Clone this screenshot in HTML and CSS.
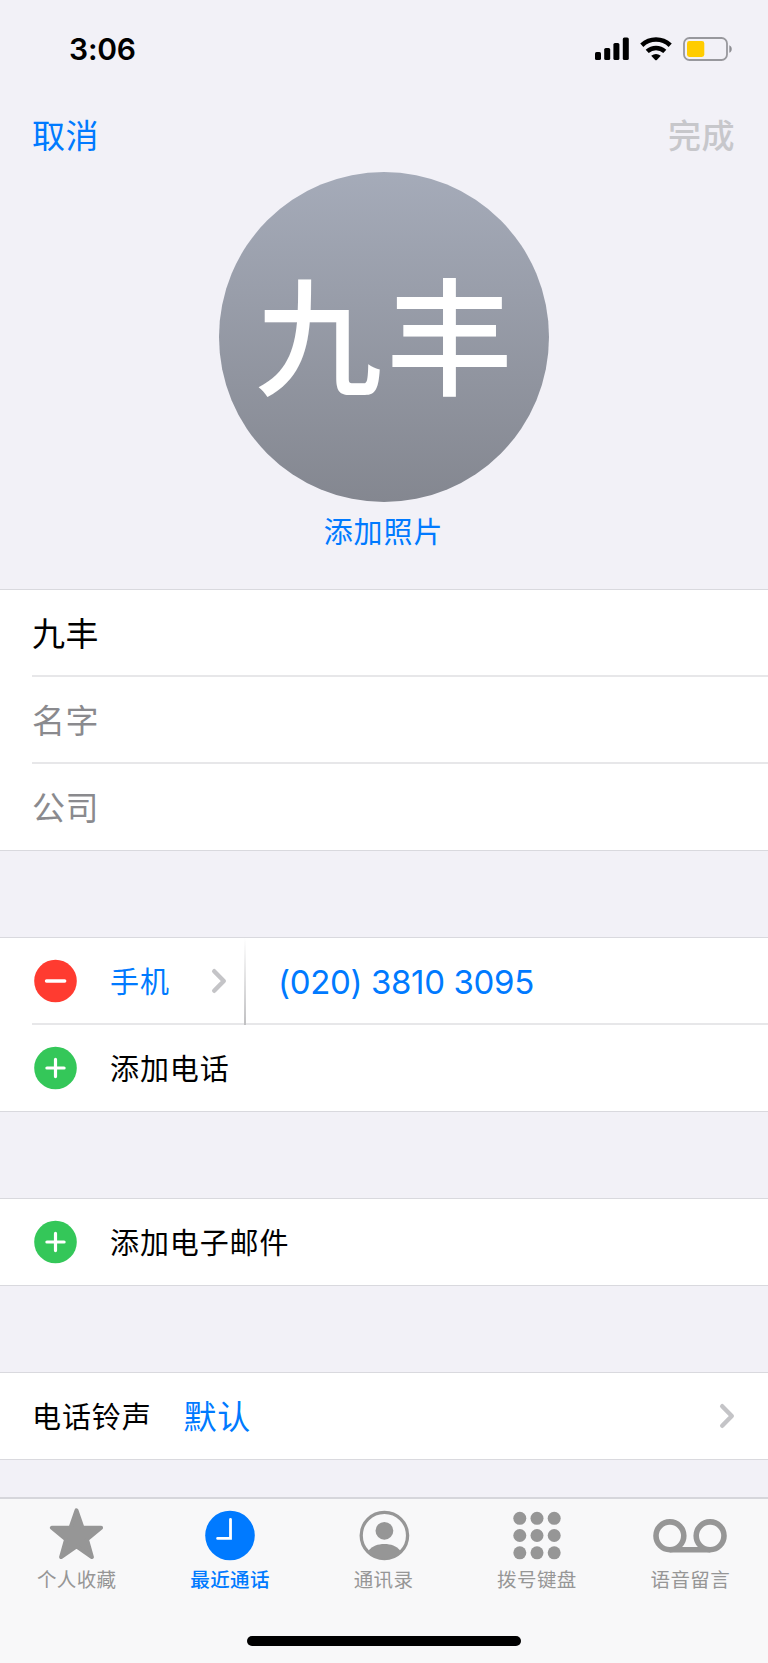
FILE: index.html
```html
<!DOCTYPE html>
<html lang="zh-CN">
<head>
  <meta charset="UTF-8">
  <meta name="viewport" content="width=device-width, initial-scale=1.0">
  <title>九丰</title>
  <link rel="stylesheet" href="styles.css">
</head>
<body>

  <div class="status-bar">
    <span class="time">3:06</span>
    <div class="status-icons">
      <svg class="signal" width="34" height="24" viewBox="0 0 34 24">
        <rect x="0" y="15" width="6" height="8" rx="1.6"/>
        <rect x="9.2" y="11" width="6" height="12" rx="1.6"/>
        <rect x="18.4" y="6" width="6" height="17" rx="1.6"/>
        <rect x="27.8" y="0.5" width="6" height="22.5" rx="1.6"/>
      </svg>
      <svg class="wifi" width="32" height="24" viewBox="0 0 32 24">
        <path d="M1.8 8.2C10 .6 22 .6 30.2 8.2" fill="none" stroke="#000" stroke-width="4.6"/>
        <path d="M7.2 14.4C12.4 9.8 19.6 9.8 24.8 14.4" fill="none" stroke="#000" stroke-width="4.6"/>
        <path d="M11.2 18.8Q16 15.2 20.8 18.8L16.8 22.9Q16 23.6 15.2 22.9Z"/>
      </svg>
      <svg class="battery" width="50" height="24" viewBox="0 0 50 24">
        <rect x="1" y="1" width="43" height="22" rx="5.5" fill="none" stroke="#98989d" stroke-width="1.8"/>
        <rect x="4" y="4" width="17.3" height="16" rx="2.4" fill="#ffcc00"/>
        <path d="M46.3 8.2C49.6 9.6 49.6 14.4 46.3 15.8Z" fill="#8e8e93"/>
      </svg>
    </div>
  </div>

  <div class="nav-bar">
    <a class="cancel">取消</a>
    <a class="done">完成</a>
  </div>

  <div class="photo">
    <div class="avatar"><span>九丰</span></div>
    <a class="add-photo">添加照片</a>
  </div>

  <div class="group">
    <div class="row"><span class="field">九丰</span></div>
    <div class="row"><span class="field placeholder">名字</span></div>
    <div class="row"><span class="field placeholder">公司</span></div>
  </div>

  <div class="group">
    <div class="row phone-row">
      <svg class="badge" width="44" height="44" viewBox="0 0 44 44">
        <circle cx="22.5" cy="22" r="21.3" fill="#ff3b30"/>
        <path d="M13.5 22H31.7" stroke="#fff" stroke-width="3.4" stroke-linecap="round"/>
      </svg>
      <span class="label blue">手机</span>
      <svg class="chevron" width="16" height="26" viewBox="0 0 16 26">
        <path d="M3.2 3.2L12.8 13L3.2 22.8" fill="none" stroke="#c4c4c7" stroke-width="4.4" stroke-linecap="round" stroke-linejoin="round"/>
      </svg>
      <div class="divider"></div>
      <span class="number">(020) 3810 3095</span>
    </div>
    <div class="row">
      <svg class="badge" width="44" height="44" viewBox="0 0 44 44">
        <circle cx="22.5" cy="22" r="21.3" fill="#34c759"/>
        <path d="M13.9 22H31.1M22.5 13.4V30.6" stroke="#fff" stroke-width="3.2" stroke-linecap="round"/>
      </svg>
      <span class="label">添加电话</span>
    </div>
  </div>

  <div class="group">
    <div class="row">
      <svg class="badge" width="44" height="44" viewBox="0 0 44 44">
        <circle cx="22.5" cy="22" r="21.3" fill="#34c759"/>
        <path d="M13.9 22H31.1M22.5 13.4V30.6" stroke="#fff" stroke-width="3.2" stroke-linecap="round"/>
      </svg>
      <span class="label">添加电子邮件</span>
    </div>
  </div>

  <div class="group">
    <div class="row">
      <span class="ringtone">电话铃声</span>
      <span class="field blue">默认</span>
      <svg class="chevron chevron-end" width="16" height="26" viewBox="0 0 16 26">
        <path d="M3.2 3.2L12.8 13L3.2 22.8" fill="none" stroke="#c4c4c7" stroke-width="4.4" stroke-linecap="round" stroke-linejoin="round"/>
      </svg>
    </div>
  </div>

  <div class="tab-bar">
    <div class="tabs">
      <div class="tab">
        <svg width="76" height="54" viewBox="0 0 76 54">
          <path d="M37.5 3.4L43.4 20.4L62.1 20.8L47.9 32.4L52.9 50L37.5 39.4L22.1 50L27.1 32.4L12.9 20.8L31.6 20.4Z" fill="#969696" stroke="#969696" stroke-width="4" stroke-linejoin="round"/>
        </svg>
        <span>个人收藏</span>
      </div>
      <div class="tab active">
        <svg width="76" height="54" viewBox="0 0 76 54">
          <circle cx="38" cy="28.5" r="24.8" fill="#007aff"/>
          <path d="M38.5 12.4V31.4H25.6" fill="none" stroke="#fff" stroke-width="2.8" stroke-linecap="round"/>
        </svg>
        <span>最近通话</span>
      </div>
      <div class="tab">
        <svg width="76" height="54" viewBox="0 0 76 54">
          <circle cx="38.4" cy="28.5" r="23.2" fill="none" stroke="#969696" stroke-width="3.3"/>
          <circle cx="38.4" cy="23.8" r="8.9" fill="#969696"/>
          <path d="M22.6 43.5C26.4 39 31.9 37 38.4 37S50.4 39 54.2 43.5C45.9 54.5 30.9 54.5 22.6 43.5Z" fill="#969696"/>
        </svg>
        <span>通讯录</span>
      </div>
      <div class="tab">
        <svg width="76" height="54" viewBox="0 0 76 54" fill="#969696">
          <circle cx="20.8" cy="11.3" r="6.5"/>
          <circle cx="38" cy="11.3" r="6.5"/>
          <circle cx="55.2" cy="11.3" r="6.5"/>
          <circle cx="20.8" cy="28.5" r="6.5"/>
          <circle cx="38" cy="28.5" r="6.5"/>
          <circle cx="55.2" cy="28.5" r="6.5"/>
          <circle cx="20.8" cy="45.8" r="6.5"/>
          <circle cx="38" cy="45.8" r="6.5"/>
          <circle cx="55.2" cy="45.8" r="6.5"/>
        </svg>
        <span>拨号键盘</span>
      </div>
      <div class="tab">
        <svg width="76" height="54" viewBox="0 0 76 54" fill="none" stroke="#969696" stroke-width="5.6">
          <circle cx="17.9" cy="28.8" r="13.9"/>
          <circle cx="58.1" cy="28.8" r="13.9"/>
          <path d="M17.9 42.7H58.1"/>
        </svg>
        <span>语音留言</span>
      </div>
    </div>
    <div class="home-indicator"></div>
  </div>

</body>
</html>
```
FILE: styles.css
```css
* {
  margin: 0;
  padding: 0;
  box-sizing: border-box;
}

body {
  width: 768px;
  height: 1663px;
  overflow: hidden;
  display: flex;
  flex-direction: column;
  background-color: #f2f1f7;
  font-family: Inter, "Noto Sans CJK SC", sans-serif;
  color: #000;
}

svg {
  display: block;
  flex-shrink: 0;
}

.blue {
  color: #007aff;
}

/* Status bar */
.status-bar {
  height: 98px;
  padding: 0 35px 0 69px;
  display: flex;
  align-items: center;
  justify-content: space-between;
}

.time {
  font-size: 30px;
  font-weight: 600;
  letter-spacing: -0.2px;
}

.status-icons {
  display: flex;
  align-items: center;
}

.wifi {
  margin: 0 11px;
}

/* Navigation */
.nav-bar {
  height: 74px;
  padding: 0 33px 0 32px;
  display: flex;
  align-items: flex-start;
  justify-content: space-between;
  font-size: 33px;
  line-height: 77px;
  letter-spacing: 0.5px;
}

.cancel {
  color: #007aff;
}

.done {
  color: #c7c7cb;
  font-weight: 500;
}

/* Contact photo */
.photo {
  height: 417px;
  display: flex;
  flex-direction: column;
  align-items: center;
}

.avatar {
  width: 330px;
  height: 330px;
  border-radius: 50%;
  background: linear-gradient(#a5abb9, #848790);
  color: #fff;
  font-size: 127px;
  font-weight: 500;
  line-height: 336px;
  letter-spacing: 4px;
  text-indent: 4px;
  text-align: center;
}

.add-photo {
  margin-top: 9px;
  padding-right: 1px;
  color: #007aff;
  font-size: 29px;
  line-height: 44px;
  letter-spacing: 0.9px;
}

/* Form groups */
.group {
  margin-bottom: 86px;
  background-color: #fff;
  border-top: 1px solid #d9d9de;
  border-bottom: 1px solid #d9d9de;
}

.row {
  height: 87px;
  padding: 0 0 1px 32px;
  display: flex;
  align-items: center;
  background: linear-gradient(#e7e7e9, #e7e7e9) 32px 100% / 100% 2px no-repeat;
}

.row:last-child {
  height: 86px;
  padding-bottom: 0;
  background: none;
}

.field {
  padding-bottom: 3px;
  font-size: 33px;
  letter-spacing: 0.6px;
}

.placeholder {
  color: #8a8a8e;
}

.badge {
  margin: 0 33px 0 1px;
}

.label,
.ringtone {
  padding-bottom: 3px;
  font-size: 29px;
  letter-spacing: 0.9px;
}

.phone-row .label {
  width: 101px;
}

.phone-row .divider {
  width: 2px;
  height: 87px;
  margin: 0 32px 0 17px;
  background: linear-gradient(#fff, #c0c0c2);
}

.number {
  padding-top: 1px;
  color: #007aff;
  font-size: 33px;
  letter-spacing: -0.35px;
}

.ringtone {
  margin-right: 32px;
}

.chevron-end {
  margin: 0 33px 0 auto;
}

/* Tab bar */
.tab-bar {
  height: 166px;
  margin-top: -49px;
  flex-shrink: 0;
  border-top: 2px solid #d6d6db;
  background-color: #f8f8f9;
}

.tabs {
  height: 140px;
  padding-right: 1px;
  display: flex;
}

.tab {
  flex: 1;
  display: flex;
  flex-direction: column;
  align-items: center;
  padding-top: 8px;
  color: #969696;
  font-size: 19.5px;
  font-weight: 400;
  letter-spacing: 0.4px;
}

.tab span {
  margin-top: 5px;
  line-height: 28px;
}

.tab.active {
  color: #007aff;
  font-weight: 500;
}

.home-indicator {
  width: 274px;
  height: 10px;
  margin: -3px auto 0;
  border-radius: 5px;
  background-color: #000;
}
```
